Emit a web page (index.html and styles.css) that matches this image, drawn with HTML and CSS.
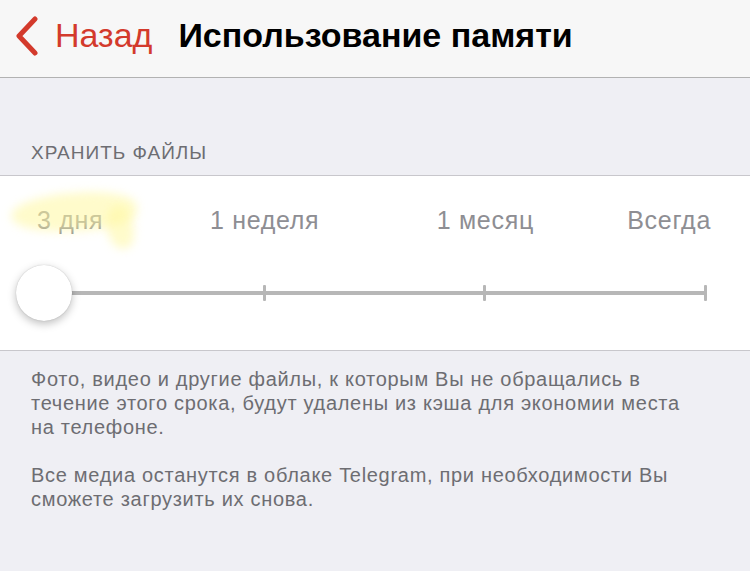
FILE: index.html
```html
<!DOCTYPE html>
<html lang="ru">
<head>
<meta charset="UTF-8">
<meta name="viewport" content="width=device-width, initial-scale=1.0">
<title>Использование памяти</title>
<link rel="stylesheet" href="styles.css">
</head>
<body>

<div class="navbar">
    <a class="back" href="#">
        <svg class="chevron" width="26" height="40" viewBox="0 0 26 40">
            <path d="M21 3 L5 20 L21 37" fill="none" stroke="#d33a2c" stroke-width="5" stroke-linecap="round" stroke-linejoin="round"/>
        </svg>
        <span>Назад</span>
    </a>
    <h1 class="title">Использование памяти</h1>
</div>

<div class="section-header">Хранить файлы</div>

<div class="card">
    <div class="labels">
        <span class="label first"><span class="marker"></span><span class="marker tail"></span>3 дня</span>
        <span class="label second">1 неделя</span>
        <span class="label third">1 месяц</span>
        <span class="label last">Всегда</span>
    </div>
    <div class="slider">
        <div class="track"></div>
        <div class="tick" style="left: 33.33%"></div>
        <div class="tick" style="left: 66.66%"></div>
        <div class="tick" style="left: 100%"></div>
        <div class="knob"></div>
    </div>
</div>

<div class="footer">
    <p>Фото, видео и другие файлы, к которым Вы не обращались в течение этого срока, будут удалены из кэша для экономии места на телефоне.</p>
    <p>Все медиа останутся в облаке Telegram, при необходимости Вы сможете загрузить их снова.</p>
</div>

</body>
</html>
```

FILE: styles.css
```css
body {
    font-family: "Liberation Sans", Arial, sans-serif;
    background-color: #efeff4;
    margin: 0;
    padding: 0;
    height: 571px;
    overflow: hidden;
}
.navbar {
    height: 78px;
    background-color: #f7f7f7;
    border-bottom: 1px solid #b2b2b2;
    display: flex;
    align-items: center;
    box-sizing: border-box;
    padding: 0 0 7px 14px;
}
.back {
    display: flex;
    align-items: center;
    text-decoration: none;
    color: #d33a2c;
    font-size: 34px;
    margin-right: 26px;
}
.chevron {
    margin-right: 15px;
    margin-top: 2px;
}
.title {
    margin: 0;
    font-size: 34px;
    font-weight: bold;
    color: #000;
}
.section-header {
    text-transform: uppercase;
    font-size: 19px;
    letter-spacing: 1px;
    color: #6d6d72;
    padding: 64px 0 0 31px;
    height: 33px;
}
.card {
    background-color: #fff;
    border-top: 1px solid #c8c7cc;
    border-bottom: 1px solid #c8c7cc;
    height: 176px;
    box-sizing: border-box;
}
.labels {
    display: grid;
    grid-template-columns: repeat(6, 1fr);
    padding: 29px 44px 0;
    font-size: 25px;
    line-height: 30px;
    letter-spacing: 0.7px;
    color: #8e8e93;
}
.label {
    white-space: nowrap;
    position: relative;
}
.first {
    grid-column: 1;
    justify-self: start;
    margin-left: -7px;
}
.second {
    grid-column: 2 / 4;
    justify-self: center;
}
.third {
    grid-column: 4 / 6;
    justify-self: center;
}
.last {
    grid-column: 6;
    justify-self: end;
    margin-right: -5px;
}
.marker {
    position: absolute;
    left: -26px;
    top: -12px;
    width: 126px;
    height: 38px;
    background: rgba(255, 247, 160, 0.55);
    border-radius: 50% 45% 40% 50%;
    filter: blur(5px);
    transform: rotate(-4deg);
}
.marker.tail {
    left: 70px;
    top: 0;
    width: 26px;
    height: 44px;
    transform: rotate(-10deg);
}
.slider {
    position: relative;
    margin: 56px 44px 0;
    height: 4px;
}
.track {
    height: 4px;
    background-color: #b7b7b7;
    border-radius: 2px;
}
.tick {
    position: absolute;
    top: -6px;
    width: 3px;
    height: 16px;
    margin-left: -2px;
    background-color: #b7b7b7;
    border-radius: 1px;
}
.knob {
    position: absolute;
    left: -28px;
    top: -26px;
    width: 56px;
    height: 56px;
    border-radius: 50%;
    background-color: #fff;
    box-shadow: 0 3px 8px rgba(0,0,0,0.25), 0 0 1px rgba(0,0,0,0.25);
}
.footer {
    padding: 16px 60px 0 31px;
    font-size: 20px;
    line-height: 24px;
    color: #6d6d72;
    letter-spacing: 0.7px;
}
.footer p {
    margin: 0 0 24px;
}
```
